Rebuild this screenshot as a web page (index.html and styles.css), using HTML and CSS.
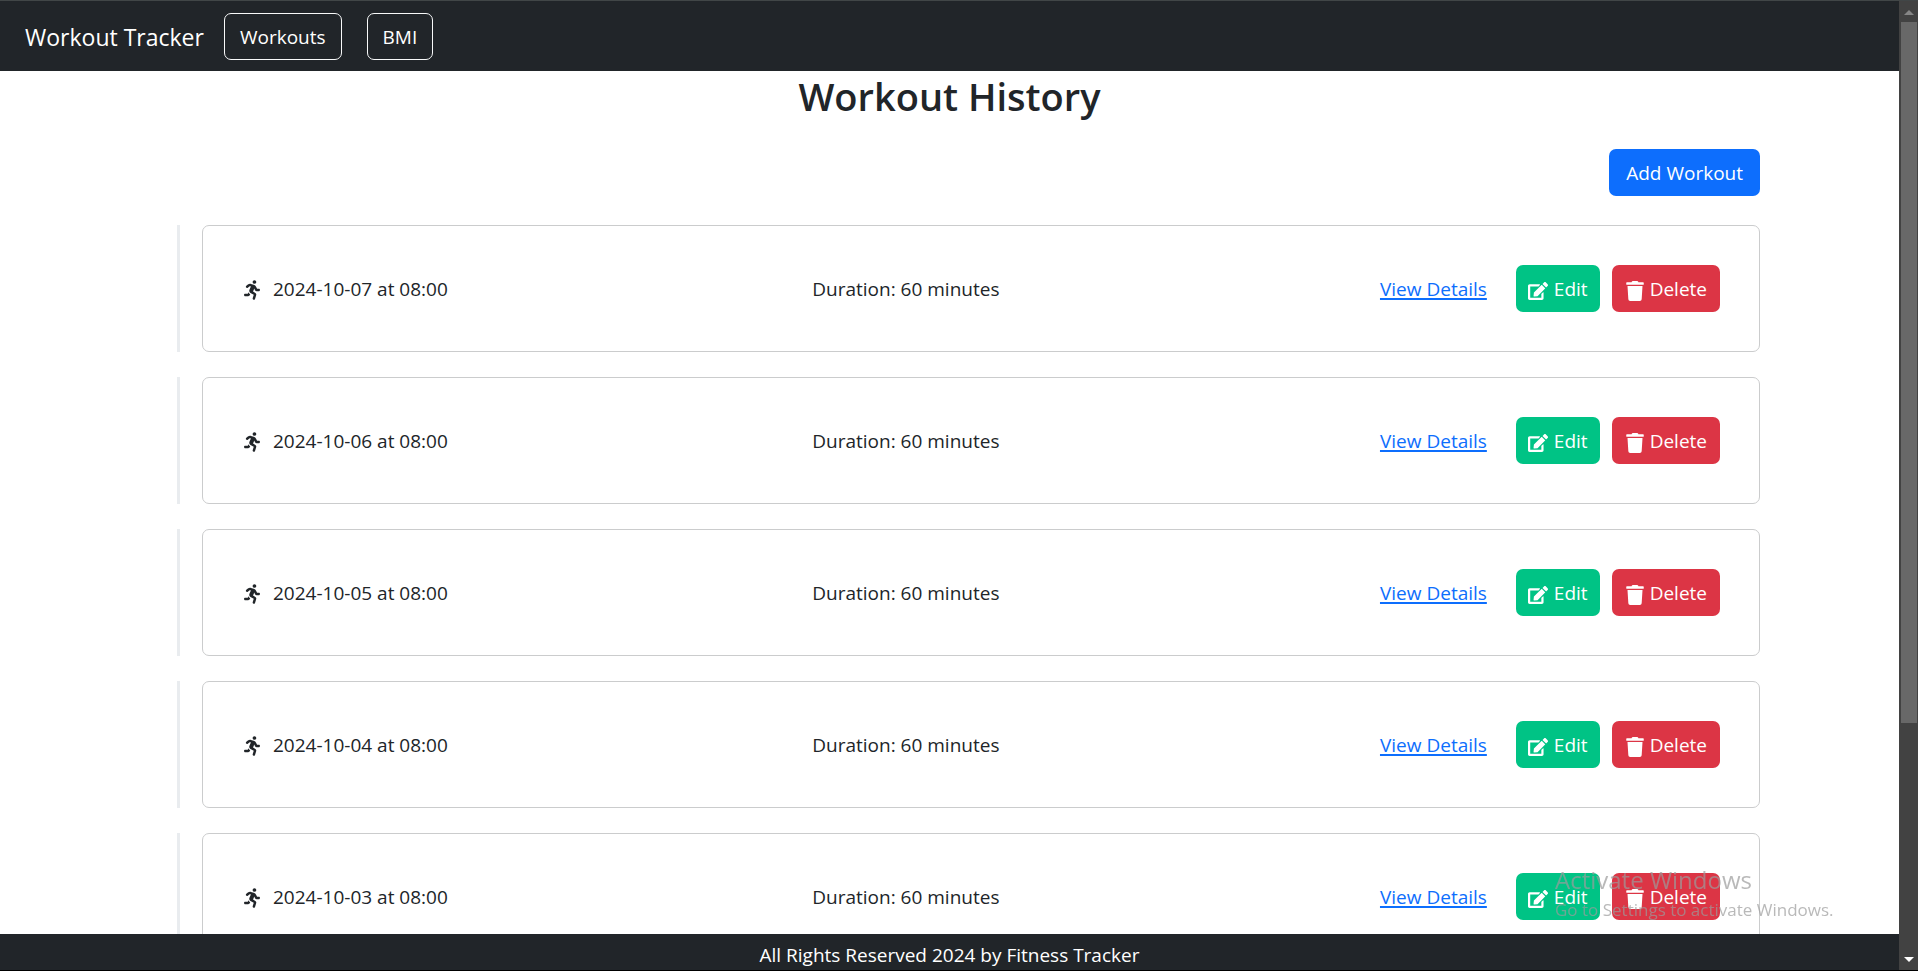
FILE: index.html
```
<!DOCTYPE html>
<html lang="en">
<head>
<meta charset="utf-8">
<title>Workout Tracker</title>
<link rel="stylesheet" href="styles.css">
</head>
<body>
<svg class="sprite" aria-hidden="true">
  <symbol id="run" viewBox="0 0 416 512"><path d="M272 96c26.51 0 48-21.49 48-48S298.51 0 272 0s-48 21.49-48 48 21.49 48 48 48zM113.69 317.47l-14.8 34.52H32c-17.67 0-32 14.33-32 32s14.33 32 32 32h77.45c19.25 0 36.58-11.44 44.11-29.09l8.79-20.52-10.67-6.3c-17.32-10.23-30.06-25.37-37.99-42.61zM384 223.99h-44.03l-26.06-53.25c-12.5-25.55-35.45-44.23-61.78-50.94l-71.08-21.14c-28.3-6.8-57.77-.55-80.84 17.14l-39.67 30.41c-14.03 10.75-16.69 30.83-5.92 44.86s30.84 16.66 44.86 5.92l39.69-30.41c7.67-5.89 17.44-8 25.27-6.14l14.7 4.37-37.46 87.39c-12.62 29.48-1.31 64.01 26.3 80.31l84.98 50.17-27.47 87.73c-5.28 16.86 4.11 34.82 20.97 40.09 3.19 1 6.41 1.48 9.58 1.48 13.61 0 26.23-8.77 30.52-22.45l31.64-101.06c5.91-20.77-2.89-43.08-21.64-54.39l-61.24-36.14 31.31-78.28 20.27 41.43c8 16.34 24.92 26.89 43.11 26.89H384c17.67 0 32-14.33 32-32s-14.33-31.99-32-31.99z"/></symbol>
  <symbol id="edit" viewBox="0 0 576 512"><path d="M402.6 83.2l90.2 90.2c3.8 3.8 3.8 10 0 13.8L274.4 405.6l-92.8 10.3c-12.4 1.4-22.9-9.1-21.5-21.5l10.3-92.8L388.8 83.2c3.8-3.8 10-3.8 13.8 0zm162-22.9l-48.8-48.8c-15.2-15.2-39.9-15.2-55.2 0l-35.4 35.4c-3.8 3.8-3.8 10 0 13.8l90.2 90.2c3.8 3.8 10 3.8 13.8 0l35.4-35.4c15.2-15.3 15.2-40 0-55.2zM384 346.2V448H64V128h229.8c3.2 0 6.2-1.3 8.5-3.5l40-40c7.6-7.6 2.2-20.5-8.5-20.5H48C21.5 64 0 85.5 0 112v352c0 26.5 21.5 48 48 48h352c26.5 0 48-21.5 48-48V306.2c0-10.7-12.9-16-20.5-8.5l-40 40c-2.2 2.3-3.5 5.3-3.5 8.5z"/></symbol>
  <symbol id="trash" viewBox="0 0 448 512"><path d="M432 32H312l-9.4-18.7A24 24 0 0 0 281.1 0H166.8a23.72 23.72 0 0 0-21.4 13.3L136 32H16A16 16 0 0 0 0 48v32a16 16 0 0 0 16 16h416a16 16 0 0 0 16-16V48a16 16 0 0 0-16-16zM53.2 467a48 48 0 0 0 47.9 45h245.8a48 48 0 0 0 47.9-45L416 128H32z"/></symbol>
</svg>
<div class="page">
  <nav class="navbar">
    <a class="brand" href="#">Workout Tracker</a>
    <a class="btn btn-outline" href="#">Workouts</a>
    <a class="btn btn-outline" href="#">BMI</a>
  </nav>
  <main class="content">
    <div class="container">
      <h1 class="title">Workout History</h1>
      <div class="toolbar"><button class="btn btn-primary" type="button">Add Workout</button></div>
      <ul class="workouts">
        <li class="workout"><div class="card">
          <span class="date"><svg class="icon icon-run"><use href="#run"/></svg>2024-10-07 at 08:00</span>
          <span>Duration: 60 minutes</span>
          <div class="actions"><a class="details" href="#">View Details</a><button class="btn btn-edit" type="button"><svg class="icon icon-edit"><use href="#edit"/></svg>Edit</button><button class="btn btn-delete" type="button"><svg class="icon icon-trash"><use href="#trash"/></svg>Delete</button></div>
        </div></li>
        <li class="workout"><div class="card">
          <span class="date"><svg class="icon icon-run"><use href="#run"/></svg>2024-10-06 at 08:00</span>
          <span>Duration: 60 minutes</span>
          <div class="actions"><a class="details" href="#">View Details</a><button class="btn btn-edit" type="button"><svg class="icon icon-edit"><use href="#edit"/></svg>Edit</button><button class="btn btn-delete" type="button"><svg class="icon icon-trash"><use href="#trash"/></svg>Delete</button></div>
        </div></li>
        <li class="workout"><div class="card">
          <span class="date"><svg class="icon icon-run"><use href="#run"/></svg>2024-10-05 at 08:00</span>
          <span>Duration: 60 minutes</span>
          <div class="actions"><a class="details" href="#">View Details</a><button class="btn btn-edit" type="button"><svg class="icon icon-edit"><use href="#edit"/></svg>Edit</button><button class="btn btn-delete" type="button"><svg class="icon icon-trash"><use href="#trash"/></svg>Delete</button></div>
        </div></li>
        <li class="workout"><div class="card">
          <span class="date"><svg class="icon icon-run"><use href="#run"/></svg>2024-10-04 at 08:00</span>
          <span>Duration: 60 minutes</span>
          <div class="actions"><a class="details" href="#">View Details</a><button class="btn btn-edit" type="button"><svg class="icon icon-edit"><use href="#edit"/></svg>Edit</button><button class="btn btn-delete" type="button"><svg class="icon icon-trash"><use href="#trash"/></svg>Delete</button></div>
        </div></li>
        <li class="workout"><div class="card">
          <span class="date"><svg class="icon icon-run"><use href="#run"/></svg>2024-10-03 at 08:00</span>
          <span>Duration: 60 minutes</span>
          <div class="actions"><a class="details" href="#">View Details</a><button class="btn btn-edit" type="button"><svg class="icon icon-edit"><use href="#edit"/></svg>Edit</button><button class="btn btn-delete" type="button"><svg class="icon icon-trash"><use href="#trash"/></svg>Delete</button></div>
        </div></li>
      </ul>
    </div>
  </main>
  <footer class="footer">All Rights Reserved 2024 by Fitness Tracker</footer>
</div>
<div class="scrollbar" aria-hidden="true">
  <svg class="arrow arrow-up" viewBox="0 0 10 5"><path d="M5 0l5 5H0z"/></svg>
  <div class="track"><div class="thumb"></div></div>
  <svg class="arrow arrow-down" viewBox="0 0 10 5"><path d="M0 0h10L5 5z"/></svg>
</div>
<div class="watermark"><div class="watermark-title">Activate Windows</div><div>Go to Settings to activate Windows.</div></div>
</body>
</html>
```
FILE: styles.css
```
* { box-sizing: border-box; }

body {
  margin: 0;
  height: 100vh;
  display: flex;
  overflow: hidden;
  border-top: 1px solid #414647;
  border-bottom: 1px solid #000;
  background: #fff;
  color: #212529;
  font: 19px/30px "Open Sans", "Noto Sans", sans-serif;
}

.sprite { position: absolute; width: 0; height: 0; }

.page {
  flex: 1;
  min-width: 0;
  display: flex;
  flex-direction: column;
}

.navbar {
  display: flex;
  align-items: center;
  padding: 12px 25px 11px;
  background: #212529;
}

.brand {
  margin-right: 20px;
  color: #fff;
  font-size: 23px;
  text-decoration: none;
}

.btn {
  display: inline-flex;
  align-items: center;
  padding: 8px 15px 6px;
  border: 1px solid transparent;
  border-radius: 7px;
  color: #fff;
  font: inherit;
  line-height: 31px;
  text-decoration: none;
  white-space: nowrap;
}

.btn-outline { margin-right: 25px; border-color: #f8f9fa; }
.btn-primary { padding: 8px 16px 6px; background: #0d6efd; }
.btn-edit { margin-left: 29px; padding: 8px 11px 6px; background: #00c385; }
.btn-delete { margin-left: 12px; padding: 8px 12px 6px; background: #dc3545; }

.content { flex: 1; min-height: 0; overflow: hidden; }

.container { max-width: 1651px; margin: 0 auto; padding: 0 15px; }

.title {
  margin: 0;
  font-size: 38px;
  font-weight: 600;
  line-height: 50px;
  text-align: center;
}

.toolbar { display: flex; justify-content: flex-end; padding: 28px 0 29px; }

.workouts { margin: 0; padding: 0 0 0 38px; list-style: none; }

.workout {
  margin-bottom: 25px;
  padding-left: 22px;
  border-left: 3px solid #e9ecef;
}

.card {
  display: flex;
  align-items: center;
  justify-content: space-between;
  padding: 39px;
  border: 1px solid #cbcccd;
  border-radius: 7px;
}

.date, .actions { display: flex; align-items: center; }
.actions { padding-left: 16px; }
.details { color: #0d6efd; text-decoration-thickness: 2px; text-underline-offset: 2px; }

.icon { height: 20px; fill: currentColor; margin-top: 3px; }
.icon-run { width: 16px; margin-left: 2px; margin-right: 13px; }
.icon-edit { width: 20px; height: 18px; margin-right: 6px; }
.icon-trash { width: 18px; margin-left: 1px; margin-right: 6px; }

.footer {
  padding: 7px 0 0;
  background: #212529;
  color: #fff;
  line-height: 29px;
  text-align: center;
}

.scrollbar {
  width: 19px;
  display: flex;
  flex-direction: column;
  align-items: center;
  background: #424242;
}

.arrow { width: 10px; height: 5px; }
.arrow-up { margin: 9px 0 7px; fill: #868686; }
.arrow-down { margin: 7px 0 8px; fill: #fff; }
.track { flex: 1; width: 100%; padding: 0 1px 0 2px; }
.thumb { height: 75.5%; background: #686868; }

.watermark {
  position: fixed;
  right: 79px;
  bottom: 47px;
  width: 284px;
  color: rgba(155, 155, 155, 0.7);
  font-size: 17px;
  line-height: 28px;
  white-space: nowrap;
}

.watermark-title { font-size: 24px; line-height: 32px; }
```
